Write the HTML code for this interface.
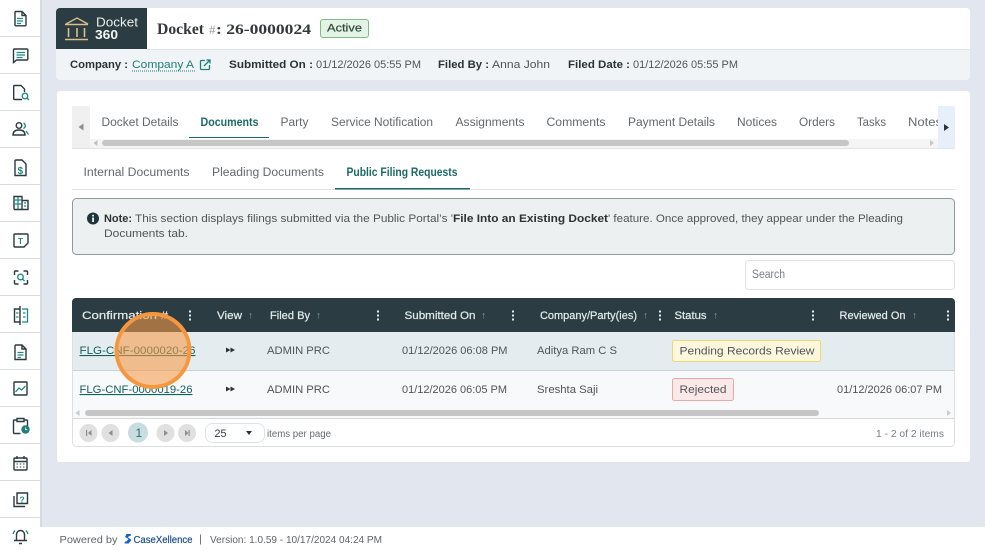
<!DOCTYPE html>
<html><head><meta charset="utf-8"><title>Docket 360</title>
<style>
html,body{margin:0;padding:0;background:#e2e7ef;width:985px;height:551px;overflow:hidden}
svg{display:block}
text{font-family:"Liberation Sans",sans-serif;font-size:11px;fill:#4f5559}
.b{font-weight:bold;fill:#2b3336}
.t{font-size:11.5px;fill:#63696d}
.h{font-size:11px;fill:#e4eaeb;stroke:#e4eaeb;stroke-width:.22}
.a{fill:#7f9a9c;font-size:10px}
.ic{fill:none;stroke:#2a3a3f;stroke-width:1.4}
.it{fill:none;stroke:#1f8a80;stroke-width:1.3}
</style></head><body>
<svg width="985" height="551" viewBox="0 0 985 551" xmlns="http://www.w3.org/2000/svg">
<rect width="985" height="551" fill="#e2e7ef"/>
<!-- sidebar -->
<rect x="40" width="2" height="527" fill="#d5dae2"/>
<rect width="40" height="551" fill="#fff"/>
<g fill="#d9dcdf"><rect y="36" width="40" height="1"/><rect y="73" width="40" height="1"/><rect y="110" width="40" height="1"/><rect y="147" width="40" height="1"/><rect y="184" width="40" height="1"/><rect y="221" width="40" height="1"/><rect y="258" width="40" height="1"/><rect y="295" width="40" height="1"/><rect y="332" width="40" height="1"/><rect y="369" width="40" height="1"/><rect y="406" width="40" height="1"/><rect y="443" width="40" height="1"/><rect y="480" width="40" height="1"/><rect y="517" width="40" height="1"/></g>
<!-- icons -->
<path class="ic" d="M16 11.500h6l4 4v9.500a.8.8 0 0 1-.8.8h-9.400a.8.8 0 0 1-.8-.8v-12.700a.8.800 0 0 1 1-.8zM22 11.500v4h4"/><path class="it" d="M17 18.500h6M17 21h6M17 23.500h4"/>
<path class="ic" d="M14 49h13a.8.8 0 0 1 .8.8v9.400a.8.8 0 0 1-.8.8h-10.500l-3 2.500v-12.700a.8.8 0 0 1 .5-.8z"/><path class="it" d="M16.500 52.500h8.500M16.500 55h8.500M16.500 57.500h6"/>
<path class="ic" d="M22 99.500h-7.500a.8.8 0 0 1-.8-.8v-12.400a.8.8 0 0 1 .8-.8h6.500l3.500 3.500v3"/><circle class="it" cx="25" cy="96" r="2.800"/><path class="it" d="M27 98l2 2"/>
<circle class="ic" cx="19" cy="125.500" r="2.800"/><path class="ic" d="M13 135c0-3.500 2.500-5 6-5s6 1.500 6 5z"/><path class="it" d="M23.500 123a3 3 0 0 1 0 5.500M26 131l2.500 3.500"/>
<path class="ic" d="M16 160h6l4 4v11.500h-11v-14.700a.8.800 0 0 1 1-.8z"/><text x="17.500" y="174" style="font-size:10px;fill:#1f8a80;font-weight:bold">$</text>
<path class="ic" d="M14 209.500v-13h8v13M14 209.500h14v-9h-6"/><path class="it" d="M14 200h8M14 204h8M18 197v12M24 203h2M24 206h2"/>
<path class="ic" d="M15 234h12a1 1 0 0 1 1 1v8l-4 4h-9a1 1 0 0 1-1-1v-11a1 1 0 0 1 1-1z"/><text x="18" y="244" style="font-size:8px;fill:#1f8a80;font-weight:bold">T</text>
<path class="ic" d="M14.500 275v-3a1 1 0 0 1 1-1h3M23.500 271h3a1 1 0 0 1 1 1v3M14.500 280v3a1 1 0 0 0 1 1h3M27.500 280v3a1 1 0 0 1-1 1h-3"/><circle class="it" cx="20.500" cy="277" r="2.800"/><path class="it" d="M22.500 279l2 2"/>
<path class="ic" d="M20 309h-5.500v13h5.500M20 306v19"/><path class="it" d="M22 309h5.500v13h-5.500M16 313h2.500M16 317h2.500M23 313h2.500M23 317h2.500"/>
<path class="ic" d="M16 345h6l4 4v10.500h-11v-13.700a.8.800 0 0 1 1-.8zM22 345v4h4"/><path class="it" d="M17.500 352.500h6M17.500 355h6M17.500 357.500h3.500"/>
<rect class="ic" x="14" y="382" width="13" height="13" rx=".5"/><path class="it" d="M15.500 392l3.500-4 2.500 2 4-4"/>
<path class="ic" d="M17 420h-2.500a1 1 0 0 0-1 1v11.500a1 1 0 0 0 1 1h6M24 420h2.500a1 1 0 0 1 1 1v6M17 418.500h7v3h-7z"/><circle cx="25.500" cy="429.500" r="4.200" fill="#1f7f78"/><path d="M25.500 427.500v2.200h1.800" stroke="#fff" fill="none" stroke-width=".8"/>
<rect class="ic" x="14" y="458" width="13" height="12" rx="1"/><path class="ic" d="M14 461.500h13M17 456v3M24 456v3"/><path d="M16.500 464h1.500M19.800 464h1.500M23 464h1.500M16.500 467h1.500M19.800 467h1.500M23 467h1.500" stroke="#2f4045" fill="none"/>
<path class="ic" d="M17 493h10.500v10.500h-10.500z"/><path class="ic" d="M14 496v10.500h11"/><text x="19.500" y="502.500" style="font-size:8.500px;fill:#1f8a80;font-weight:bold">?</text>
<path class="ic" d="M16.500 540.500v-6a4 4 0 0 1 8 0v6M14 540.500h13M19 543.500h3"/><path class="it" d="M13 534c.5-1.500 1-2.500 2-3.500M28 534c-.5-1.500-1-2.500-2-3.500"/>

<!-- header card -->
<rect x="56" y="8" width="914" height="72" rx="4" fill="#f0f4f6"/>
<path d="M147 8h819a4 4 0 0 1 4 4v37h-823z" fill="#fff"/>
<rect x="147" y="49" width="823" height="1" fill="#dfe3e6"/>
<path d="M60 8h87v41h-91v-37a4 4 0 0 1 4-4z" fill="#2b3d42"/>
<g fill="none" stroke="#d9bf8b" stroke-width="1.400"><path d="M66 24l11-6 11 6"/><path d="M65 24.500h23"/><path d="M68.500 28v9M77 28v9M84.500 28v9" stroke-width="1.600"/><path d="M65 39.500h23" stroke-width="1.500"/></g>
<text x="96" y="26.500" textLength="42" lengthAdjust="spacingAndGlyphs" style="font-size:12.500px;fill:#e8eeee">Docket</text>
<text x="95" y="39" textLength="23" lengthAdjust="spacingAndGlyphs" style="font-size:12.500px;font-weight:bold;fill:#f3f5f5">360</text>
<text x="157" y="34" textLength="47" lengthAdjust="spacingAndGlyphs" style="font-family:'Liberation Serif',serif;font-size:16px;font-weight:bold;fill:#33383a">Docket</text>
<text x="209" y="34" style="font-family:'Liberation Serif',serif;font-size:13px;fill:#9aa0a3">#</text>
<text x="216" y="34" textLength="95" lengthAdjust="spacingAndGlyphs" style="font-family:'Liberation Serif',serif;font-size:15px;font-weight:bold;fill:#33383a">: 26-0000024</text>
<rect x="320.500" y="19.500" width="48" height="18" rx="2.500" fill="#e5f3e6" stroke="#7fbb86"/>
<text x="327" y="31.500" textLength="35" lengthAdjust="spacingAndGlyphs" style="font-size:11px;fill:#2f4a36;stroke:#2f4a36;stroke-width:.2">Active</text>

<text class="b" x="70" y="68" textLength="58" lengthAdjust="spacingAndGlyphs">Company :</text>
<text x="132" y="68" textLength="62" lengthAdjust="spacingAndGlyphs" style="fill:#1f7f78">Company A</text>
<path d="M132 71h64" stroke="#1f7f78" stroke-dasharray="1 1" stroke-width="1"/>
<path d="M205 60.500h-3.500a1 1 0 0 0-1 1v7a1 1 0 0 0 1 1h7a1 1 0 0 0 1-1v-3.500M204 66l5.500-5.500M206.500 60h3.500v3.500" fill="none" stroke="#1f7f78" stroke-width="1.300"/>
<text class="b" x="229" y="68" textLength="84" lengthAdjust="spacingAndGlyphs">Submitted On :</text>
<text x="316" y="68" textLength="105" lengthAdjust="spacingAndGlyphs">01/12/2026 05:55 PM</text>
<text class="b" x="438" y="68" textLength="51" lengthAdjust="spacingAndGlyphs">Filed By :</text>
<text x="492" y="68" textLength="58" lengthAdjust="spacingAndGlyphs">Anna John</text>
<text class="b" x="568" y="68" textLength="62" lengthAdjust="spacingAndGlyphs">Filed Date :</text>
<text x="633" y="68" textLength="105" lengthAdjust="spacingAndGlyphs">01/12/2026 05:55 PM</text>

<!-- main card -->
<rect x="57" y="91" width="913" height="371" rx="3" fill="#fff"/>
<!-- tabs -->
<rect x="72" y="106" width="18" height="42" fill="#f0f0f0"/>
<path d="M83.500 123.500v7l-5-3.500z" fill="#8e8e8e"/>
<rect x="938" y="106" width="17" height="42" fill="#e7f0fa"/>
<path d="M944 124v7l5-3.500z" fill="#2b3336"/>
<rect x="90" y="139" width="848" height="9" fill="#f5f5f5"/>
<rect x="102" y="140" width="747" height="6" rx="3" fill="#c6c6c6"/>
<path d="M97.500 140v6l-4-3z" fill="#c0c0c0"/><path d="M930 140v6l4-3z" fill="#c6c6c6"/>
<rect x="72" y="148" width="883" height="1" fill="#e4e4e4"/>
<text class="t" x="101.500" y="126" textLength="77" lengthAdjust="spacingAndGlyphs">Docket Details</text>
<text class="t" x="200.500" y="126" textLength="58" lengthAdjust="spacingAndGlyphs" style="font-weight:bold;fill:#1c6a64">Documents</text>
<rect x="189" y="137" width="80" height="1" fill="#1c6a64"/>
<text class="t" x="280.500" y="126" textLength="28" lengthAdjust="spacingAndGlyphs">Party</text>
<text class="t" x="331" y="126" textLength="102" lengthAdjust="spacingAndGlyphs">Service Notification</text>
<text class="t" x="455.500" y="126" textLength="69" lengthAdjust="spacingAndGlyphs">Assignments</text>
<text class="t" x="546.500" y="126" textLength="59" lengthAdjust="spacingAndGlyphs">Comments</text>
<text class="t" x="628" y="126" textLength="87" lengthAdjust="spacingAndGlyphs">Payment Details</text>
<text class="t" x="737" y="126" textLength="40" lengthAdjust="spacingAndGlyphs">Notices</text>
<text class="t" x="799" y="126" textLength="36" lengthAdjust="spacingAndGlyphs">Orders</text>
<text class="t" x="857" y="126" textLength="29" lengthAdjust="spacingAndGlyphs">Tasks</text>
<svg x="900" y="110" width="38" height="24"><text class="t" x="8" y="16" textLength="34" lengthAdjust="spacingAndGlyphs">Notes</text></svg>
<!-- subtabs -->
<text class="t" x="83.500" y="176" textLength="106" lengthAdjust="spacingAndGlyphs">Internal Documents</text>
<text class="t" x="212" y="176" textLength="112" lengthAdjust="spacingAndGlyphs">Pleading Documents</text>
<text class="t" x="346.500" y="176" textLength="111" lengthAdjust="spacingAndGlyphs" style="font-weight:bold;fill:#1c6a64">Public Filing Requests</text>
<rect x="72" y="189" width="883" height="1" fill="#e1e3e4"/>
<rect x="335" y="188" width="135" height="1.500" fill="#1c6a64"/>
<!-- alert -->
<rect x="72.500" y="198.500" width="882" height="56" rx="4" fill="#edf0f1" stroke="#8f9a9b"/>
<circle cx="93" cy="218.500" r="6" fill="#20353b"/>
<rect x="92.200" y="217.500" width="1.700" height="4.500" fill="#fff"/><rect x="92.200" y="214.800" width="1.700" height="1.700" fill="#fff"/>
<text class="b" x="104" y="222" textLength="28" lengthAdjust="spacingAndGlyphs">Note:</text>
<text x="135" y="222" textLength="318" lengthAdjust="spacingAndGlyphs">This section displays filings submitted via the Public Portal’s '</text>
<text class="b" x="453" y="222" textLength="155" lengthAdjust="spacingAndGlyphs">File Into an Existing Docket</text>
<text x="608" y="222" textLength="295" lengthAdjust="spacingAndGlyphs">' feature. Once approved, they appear under the Pleading</text>
<text x="104" y="237" textLength="84" lengthAdjust="spacingAndGlyphs">Documents tab.</text>
<!-- search -->
<rect x="745.500" y="260.500" width="209" height="29" rx="3" fill="#fff" stroke="#dfe2e4"/>
<text x="752" y="278" textLength="33" lengthAdjust="spacingAndGlyphs" style="font-size:11.500px;fill:#787e82">Search</text>
<!-- table -->
<rect x="72.500" y="298.500" width="882" height="148" rx="4" fill="#fff" stroke="#dcdfe1"/>
<path d="M76 298h875a4 4 0 0 1 4 4v30h-883v-30a4 4 0 0 1 4-4z" fill="#2b3d42"/>
<rect x="73" y="332" width="881" height="38" fill="#e4ecef"/>
<rect x="73" y="370" width="881" height="1" fill="#c9d2d6"/>
<rect x="73" y="371" width="881" height="47" fill="#f7f9fa"/>
<rect x="73" y="418" width="881" height="1" fill="#d5d8da"/>
<rect x="85" y="410" width="734" height="6" rx="3" fill="#c6c6c6"/>
<path d="M79.500 410v6l-4-3z" fill="#c9c9c9"/>
<path d="M947 410v6l4-3z" fill="#cccccc"/>
<text class="h" x="82" y="319" textLength="86" lengthAdjust="spacingAndGlyphs">Confirmation #</text>
<text class="h" x="217" y="319" textLength="25" lengthAdjust="spacingAndGlyphs">View</text><text class="a" x="248" y="318.500">↑</text>
<text class="h" x="270" y="319" textLength="40" lengthAdjust="spacingAndGlyphs">Filed By</text><text class="a" x="316" y="318.500">↑</text>
<text class="h" x="404.500" y="319" textLength="71" lengthAdjust="spacingAndGlyphs">Submitted On</text><text class="a" x="481" y="318.500">↑</text>
<text class="h" x="540" y="319" textLength="97" lengthAdjust="spacingAndGlyphs">Company/Party(ies)</text><text class="a" x="643" y="318.500">↑</text>
<text class="h" x="674.500" y="319" textLength="32" lengthAdjust="spacingAndGlyphs">Status</text><text class="a" x="713" y="318.500">↑</text>
<text class="h" x="839.500" y="319" textLength="66" lengthAdjust="spacingAndGlyphs">Reviewed On</text><text class="a" x="912" y="318.500">↑</text>
<g fill="#e6ecec"><rect x="189" y="310.500" width="2" height="2"/><rect x="189" y="314.500" width="2" height="2"/><rect x="189" y="318.500" width="2" height="2"/>
<rect x="377" y="310.500" width="2" height="2"/><rect x="377" y="314.500" width="2" height="2"/><rect x="377" y="318.500" width="2" height="2"/>
<rect x="512" y="310.500" width="2" height="2"/><rect x="512" y="314.500" width="2" height="2"/><rect x="512" y="318.500" width="2" height="2"/>
<rect x="659" y="310.500" width="2" height="2"/><rect x="659" y="314.500" width="2" height="2"/><rect x="659" y="318.500" width="2" height="2"/>
<rect x="812" y="310.500" width="2" height="2"/><rect x="812" y="314.500" width="2" height="2"/><rect x="812" y="318.500" width="2" height="2"/>
<rect x="947" y="310.500" width="2" height="2"/><rect x="947" y="314.500" width="2" height="2"/><rect x="947" y="318.500" width="2" height="2"/></g>
<!-- rows -->
<text x="79.500" y="354" textLength="116" lengthAdjust="spacingAndGlyphs" style="fill:#14615c;text-decoration:underline">FLG-CNF-0000020-26</text>
<text x="79.500" y="393" textLength="113" lengthAdjust="spacingAndGlyphs" style="fill:#14615c;text-decoration:underline">FLG-CNF-0000019-26</text>
<path d="M226 347.500v5l4.500-2.500zM230.500 347.500v5l4.500-2.500zM226 386.500v5l4.500-2.500zM230.500 386.500v5l4.500-2.500z" fill="#2b3336"/>
<text x="267" y="354" textLength="63" lengthAdjust="spacingAndGlyphs">ADMIN PRC</text>
<text x="267" y="393" textLength="63" lengthAdjust="spacingAndGlyphs">ADMIN PRC</text>
<text x="402" y="354" textLength="105.500" lengthAdjust="spacingAndGlyphs">01/12/2026 06:08 PM</text>
<text x="402" y="393" textLength="105" lengthAdjust="spacingAndGlyphs">01/12/2026 06:05 PM</text>
<text x="537" y="354" textLength="80" lengthAdjust="spacingAndGlyphs">Aditya Ram C S</text>
<text x="537" y="393" textLength="61" lengthAdjust="spacingAndGlyphs">Sreshta Saji</text>
<rect x="672.500" y="340.500" width="148" height="21" rx="2" fill="#fdf8dd" stroke="#ecd773"/>
<text x="679.500" y="354.500" textLength="135" lengthAdjust="spacingAndGlyphs">Pending Records Review</text>
<rect x="672.500" y="378.500" width="61" height="22" rx="2" fill="#fbe9e9" stroke="#e8a9a9"/>
<text x="679.500" y="393" textLength="47" lengthAdjust="spacingAndGlyphs">Rejected</text>
<text x="837" y="393" textLength="105" lengthAdjust="spacingAndGlyphs">01/12/2026 06:07 PM</text>
<!-- pager -->
<g fill="#e0e0e0"><circle cx="88.500" cy="433" r="9"/><circle cx="110.500" cy="433" r="9"/><circle cx="165.500" cy="433" r="9"/><circle cx="187" cy="433" r="9"/></g>
<circle cx="138" cy="432.500" r="10" fill="#c7dde0"/>
<text x="135.500" y="437" style="font-size:12px;fill:#2c6a6a">1</text>
<g fill="#8e8e8e"><path d="M91.500 430v6l-3.500-3zM86 430h1.200v6h-1.200z"/><path d="M112.500 430v6l-4-3z"/><path d="M164 430v6l4-3z"/><path d="M185 430v6l3.500-3zM188.500 430h1.200v6h-1.200z"/></g>
<rect x="205.500" y="423.500" width="59" height="19" rx="7" fill="#fff" stroke="#dfe2e4"/>
<text x="214.500" y="437" textLength="12" lengthAdjust="spacingAndGlyphs" style="fill:#33383a">25</text>
<path d="M246 431h6l-3 4z" fill="#2b3336"/>
<text x="267" y="437" textLength="64" lengthAdjust="spacingAndGlyphs" style="font-size:10px;fill:#666c70">items per page</text>
<text x="876" y="437" textLength="68" lengthAdjust="spacingAndGlyphs" style="font-size:10px;fill:#787e82">1 - 2 of 2 items</text>
<!-- highlight -->
<circle cx="153" cy="350.500" r="36.500" fill="#f59a47" fill-opacity=".58" stroke="#f5973f" stroke-width="4"/>
<!-- footer -->
<rect x="40" y="527" width="945" height="24" fill="#fff"/>
<text x="59.500" y="543" textLength="58" lengthAdjust="spacingAndGlyphs" style="font-size:10.500px;fill:#5f6569">Powered by</text>
<path d="M131 534h-4.500l-1.500 3 3.500 2-2 2.500h-1.500l-.5 2h4l3-3.500-3.500-2.500 1-1.500h1.500z" fill="#1565c0"/>
<text x="133.500" y="543" textLength="59" lengthAdjust="spacingAndGlyphs" style="font-size:10.500px;fill:#1f4e8c;stroke:#1f4e8c;stroke-width:.2">CaseXellence</text>
<rect x="200" y="534.500" width="1" height="10" fill="#777"/>
<text x="210" y="543" textLength="172" lengthAdjust="spacingAndGlyphs" style="font-size:10.500px;fill:#5f6569">Version: 1.0.59 - 10/17/2024 04:24 PM</text>
</svg>
</body></html>
